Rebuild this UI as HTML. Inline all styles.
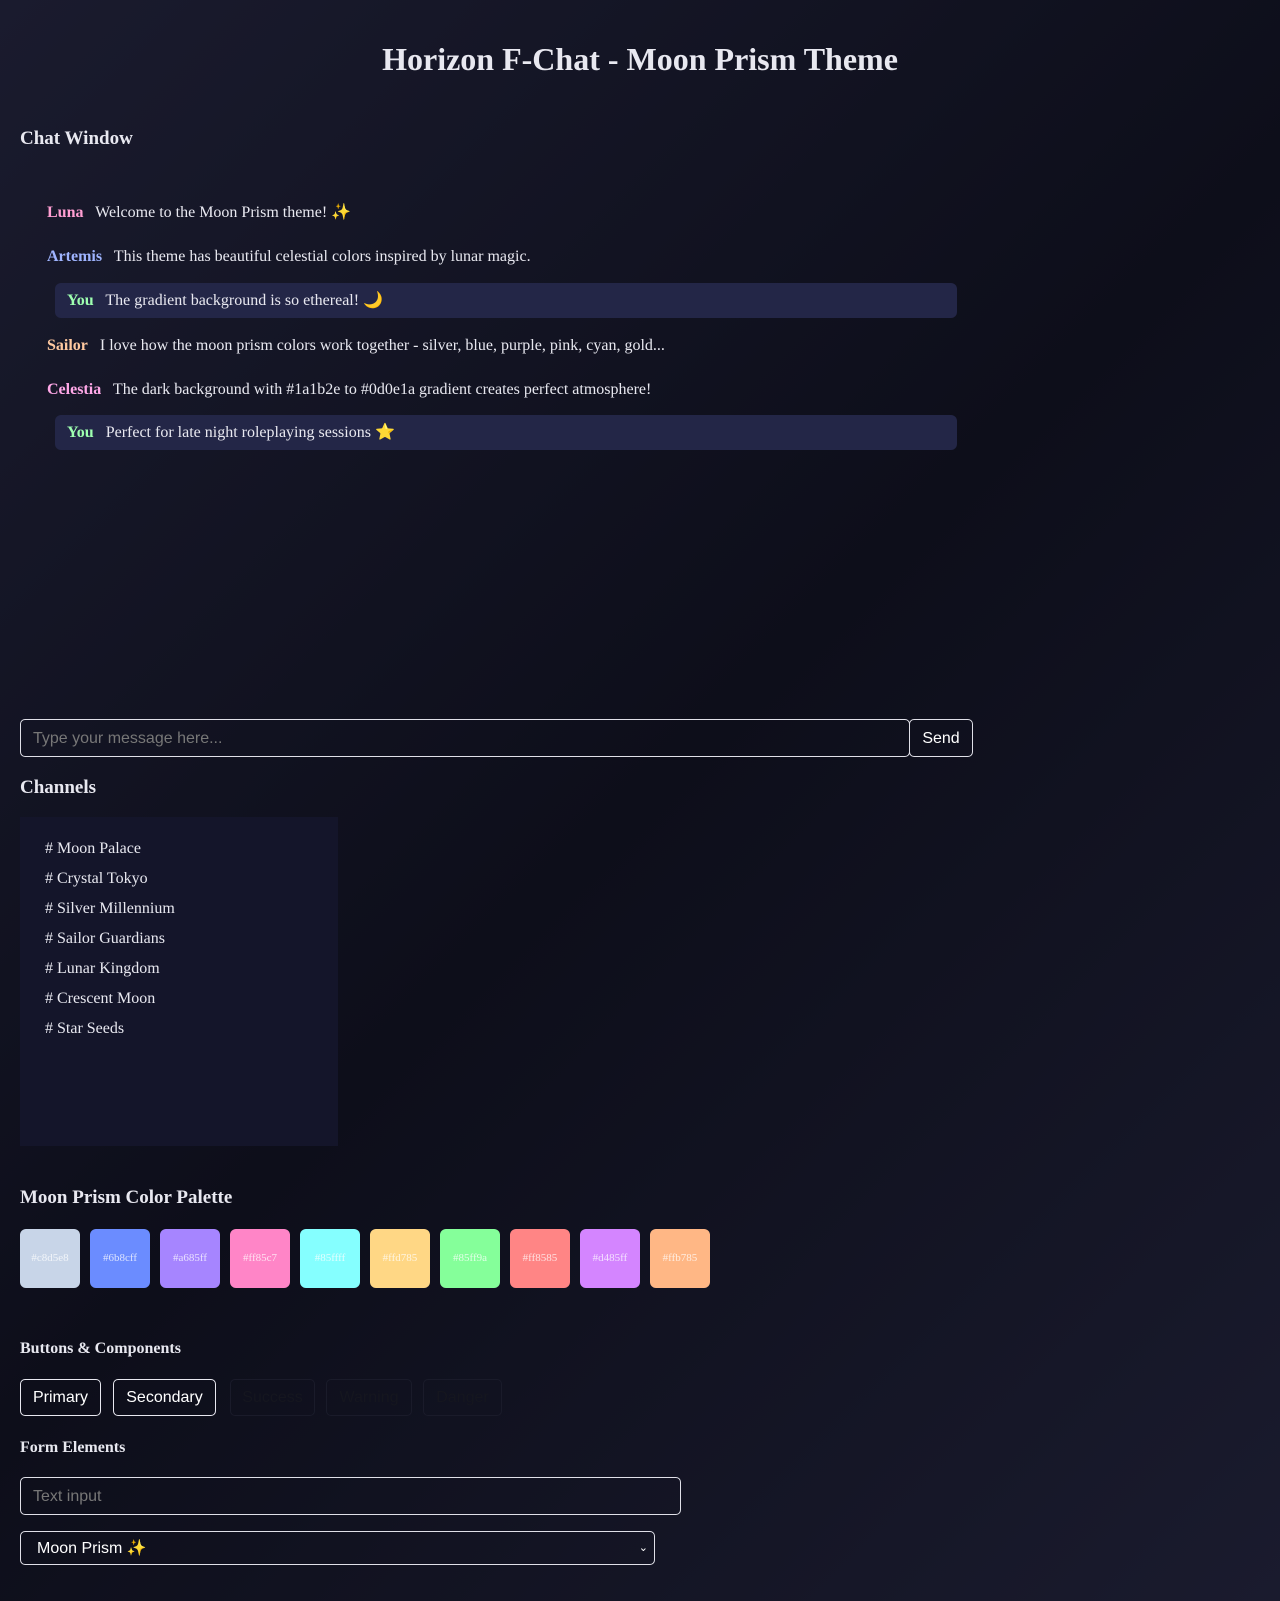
<!DOCTYPE html>
<html><head><meta charset="utf-8"><style>
*{box-sizing:border-box;margin:0;padding:0}
html,body{width:1280px;height:1601px;overflow:hidden}
body{background:linear-gradient(135deg,#1a1b2e 0%,#0d0e1a 50%,#1a1b2e 100%);font-family:"Liberation Serif",serif;color:#e8e8f0;position:relative}
.a{position:absolute;white-space:nowrap}
h1{position:absolute;left:0;width:1280px;text-align:center;top:41px;font-size:32px;font-weight:bold;color:#e8e8f0}
.h{font-weight:bold;font-size:19px}
.msg{font-size:16px;line-height:20px}
.n{font-weight:bold;margin-right:8px}
.you{position:absolute;left:55px;width:902px;height:35px;background:#232647;border-radius:6px;padding:0 0 0 12px;line-height:35px;font-size:16px}
.inp{position:absolute;border:1px solid #e0e0e8;border-radius:5px;background:transparent;font-family:"Liberation Sans",sans-serif;font-size:16px;color:#777;padding-left:12px}
.btn{position:absolute;top:1379px;height:37px;border-radius:5px;font-family:"Liberation Sans",sans-serif;font-size:16px;line-height:35px;text-align:center}
.sw{position:absolute;top:1229px;width:60px;height:59px;border-radius:6px;font-size:11px;color:rgba(255,255,255,.75);text-align:center;line-height:59px}
.ch{position:absolute;left:45px;font-size:16px}
</style></head><body>
<h1>Horizon F-Chat - Moon Prism Theme</h1>
<div class="a h" style="left:20px;top:128px">Chat Window</div>
<div class="a msg" style="left:47px;top:203px"><span class="n" style="color:#ff9ed2">Luna</span> Welcome to the Moon Prism theme! ✨</div>
<div class="a msg" style="left:47px;top:247px"><span class="n" style="color:#9fb4ff">Artemis</span> This theme has beautiful celestial colors inspired by lunar magic.</div>
<div class="you" style="top:283px"><span class="n" style="color:#9effb0">You</span> The gradient background is so ethereal! 🌙</div>
<div class="a msg" style="left:47px;top:336px"><span class="n" style="color:#ffc9a0">Sailor</span> I love how the moon prism colors work together - silver, blue, purple, pink, cyan, gold...</div>
<div class="a msg" style="left:47px;top:380px"><span class="n" style="color:#ffa8e8">Celestia</span> The dark background with #1a1b2e to #0d0e1a gradient creates perfect atmosphere!</div>
<div class="you" style="top:415px"><span class="n" style="color:#9effb0">You</span> Perfect for late night roleplaying sessions ⭐</div>
<div class="inp" style="left:20px;top:719px;width:890px;height:38px;line-height:37px">Type your message here...</div>
<div class="inp" style="left:909px;top:719px;width:64px;height:38px;line-height:37px;color:#fff;padding:0;text-align:center">Send</div>
<div class="a h" style="left:20px;top:777px">Channels</div>
<div class="a" style="left:20px;top:817px;width:318px;height:329px;background:#14152a"></div>
<div class="ch" style="top:840px"># Moon Palace</div>
<div class="ch" style="top:870px"># Crystal Tokyo</div>
<div class="ch" style="top:900px"># Silver Millennium</div>
<div class="ch" style="top:930px"># Sailor Guardians</div>
<div class="ch" style="top:960px"># Lunar Kingdom</div>
<div class="ch" style="top:990px"># Crescent Moon</div>
<div class="ch" style="top:1020px"># Star Seeds</div>
<div class="a h" style="left:20px;top:1187px">Moon Prism Color Palette</div>
<div class="sw" style="left:20px;background:#c8d5e8">#c8d5e8</div>
<div class="sw" style="left:90px;background:#6b8cff">#6b8cff</div>
<div class="sw" style="left:160px;background:#a685ff">#a685ff</div>
<div class="sw" style="left:230px;background:#ff85c7">#ff85c7</div>
<div class="sw" style="left:300px;background:#85ffff">#85ffff</div>
<div class="sw" style="left:370px;background:#ffd785">#ffd785</div>
<div class="sw" style="left:440px;background:#85ff9a">#85ff9a</div>
<div class="sw" style="left:510px;background:#ff8585">#ff8585</div>
<div class="sw" style="left:580px;background:#d485ff">#d485ff</div>
<div class="sw" style="left:650px;background:#ffb785">#ffb785</div>
<div class="a" style="left:20px;top:1340px;font-weight:bold;font-size:16px">Buttons &amp; Components</div>
<div class="btn" style="left:20px;width:81px;border:1px solid #e8e8f0;color:#fff">Primary</div>
<div class="btn" style="left:113px;width:103px;border:1px solid #e8e8f0;color:#fff">Secondary</div>
<div class="btn" style="left:230px;width:85px;border:1px solid #1a1b2a;color:#15161f">Success</div>
<div class="btn" style="left:326px;width:86px;border:1px solid #1a1b2a;color:#15161f">Warning</div>
<div class="btn" style="left:423px;width:79px;border:1px solid #1a1b2a;color:#15161f">Danger</div>
<div class="a" style="left:20px;top:1439px;font-weight:bold;font-size:16px">Form Elements</div>
<div class="inp" style="left:20px;top:1477px;width:661px;height:38px;line-height:37px">Text input</div>
<div class="inp" style="left:20px;top:1531px;width:635px;height:34px;line-height:33px;color:#fff;padding-left:16px">Moon Prism ✨<span style="position:absolute;right:6px;top:0;font-size:11px">&#8964;</span></div>
</body></html>
